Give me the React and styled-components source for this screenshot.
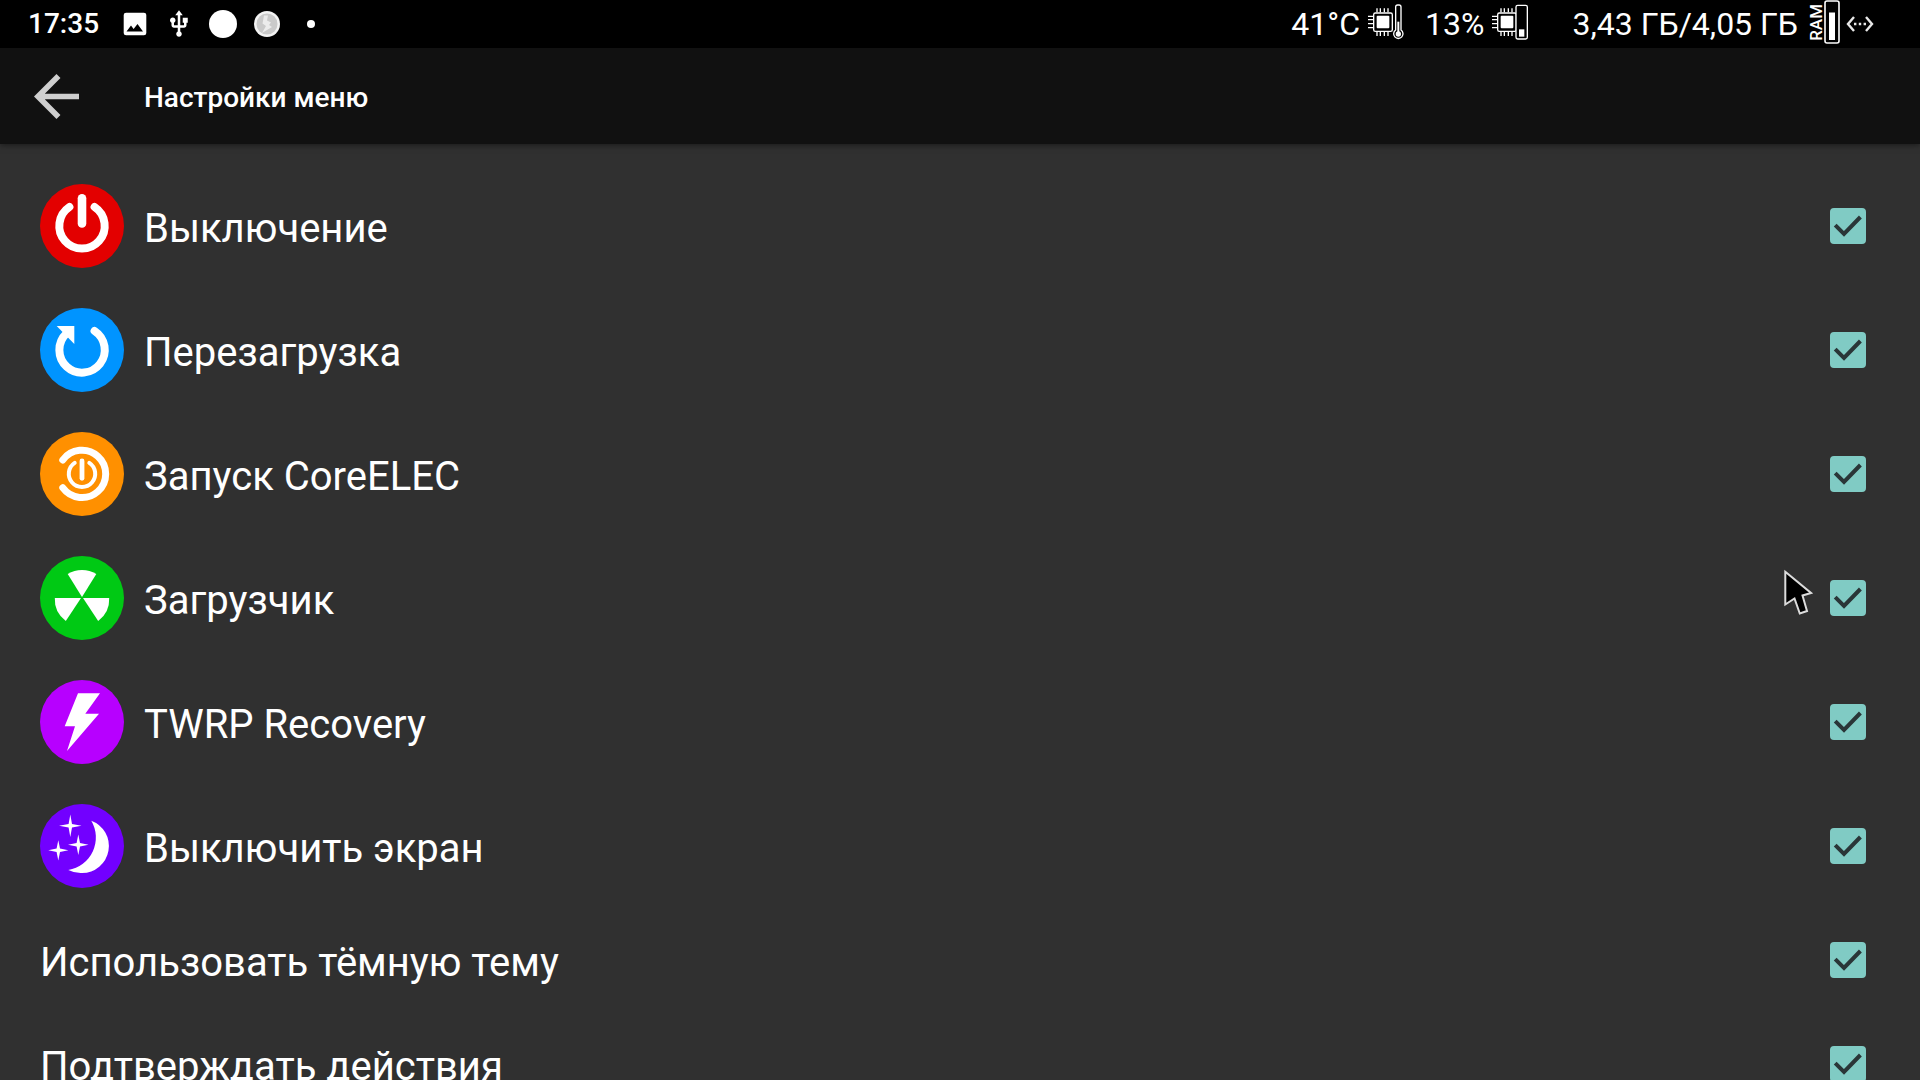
import React, { useState } from 'react'
import styled, { createGlobalStyle } from 'styled-components'

const GlobalStyle = createGlobalStyle`
  * {
    box-sizing: border-box;
  }
  body {
    margin: 0;
    background: #303030;
    color: #fff;
    font-family: Roboto, 'Noto Sans', sans-serif;
  }
`

const Page = styled.div`
  position: relative;
  display: flex;
  flex-direction: column;
  height: 100vh;
  overflow: hidden;
`

const StatusBar = styled.div`
  display: flex;
  flex: none;
  justify-content: space-between;
  height: 48px;
  padding: 0 46px 0 28px;
  background: #000;
`

const StatusGroup = styled.div`
  display: flex;
  align-items: center;
`

const Clock = styled.time`
  margin-right: 14px;
  font-size: 28px;
  font-weight: 500;
  line-height: 48px;
`

const Notifications = styled.div`
  display: grid;
  grid-auto-flow: column;
  grid-auto-columns: 44px;
  place-items: center;
`

const Stat = styled.div`
  display: flex;
  align-items: center;
  gap: ${(props) => props.gap || '8px'};
  margin-right: ${(props) => props.space || '0'};
  font-size: 32px;
  line-height: 48px;
`

const RamLabel = styled.span`
  writing-mode: vertical-rl;
  transform: rotate(180deg);
  font-size: 17px;
  font-weight: 500;
  line-height: 16px;
`

const RamMeter = styled.div`
  display: flex;
  align-items: center;
  height: 48px;
  padding-bottom: 4px;
`

const AppBar = styled.header`
  position: relative;
  z-index: 1;
  display: flex;
  flex: none;
  align-items: center;
  height: 96px;
  padding: 0 34px;
  background: #111;
  box-shadow: 0 1px 6px rgba(0, 0, 0, 0.5);
`

const BackButton = styled.button`
  display: flex;
  padding: 0;
  margin-right: 65px;
  border: 0;
  background: none;
  color: #cfcfcf;
  cursor: pointer;
`

const Title = styled.h1`
  margin: 0;
  padding-top: 4px;
  font-size: 28px;
  font-weight: 500;
  line-height: 32px;
`

const List = styled.ul`
  flex: 1;
  min-height: 0;
  margin: 0;
  padding: 20px 0;
  overflow-y: auto;
  scrollbar-width: none;
  list-style: none;
`

const Row = styled.label`
  display: flex;
  align-items: center;
  gap: 20px;
  height: ${(props) => (props.$tall ? '124px' : '104px')};
  padding: 0 54px 0 40px;
  cursor: pointer;
`

const RowText = styled.span`
  flex: 1;
  padding-top: 6px;
  font-size: 40px;
  line-height: 48px;
`

const RowIcon = styled.span`
  display: flex;
  flex: none;
  width: 84px;
  height: 84px;
  border-radius: 50%;
  background: ${(props) => props.color};
`

const CheckWrap = styled.span`
  display: grid;
  flex: none;
  width: 36px;
  height: 36px;

  > * {
    grid-area: 1 / 1;
  }

  svg {
    pointer-events: none;
  }
`

const CheckInput = styled.input`
  appearance: none;
  width: 36px;
  height: 36px;
  margin: 0;
  border: 4px solid #80cbc4;
  border-radius: 4px;

  &:checked {
    background: #80cbc4;
  }
`

const Pointer = styled.svg`
  position: absolute;
  z-index: 2;
  top: 569px;
  left: 1783px;
  pointer-events: none;
`

const PowerIcon = () => (
  <svg width="84" height="84" fill="none" stroke="#fff" strokeLinecap="round">
    <path d="M29.4 23A22.7 22.7 0 1 0 54.6 23" strokeWidth="8" />
    <path d="M42 14.3V39.5" strokeWidth="8.6" />
  </svg>
)

const RebootIcon = () => (
  <svg width="84" height="84" fill="none" stroke="#fff">
    <path
      d="M26.5 25.4A22.7 22.7 0 1 0 54.6 23"
      strokeWidth="8"
      strokeLinecap="round"
    />
    <path d="M16.7 18H34.3V36Z" fill="#fff" stroke="none" />
  </svg>
)

const CoreIcon = () => (
  <svg width="84" height="84" fill="none" stroke="#fff" strokeLinecap="round">
    <path d="M22.8 28A23.7 23.7 0 1 1 22.8 55.8" strokeWidth="7" />
    <path d="M34.7 30.8A13.2 13.2 0 1 0 49.3 30.8" strokeWidth="4" />
    <path d="M42 29V46.3" strokeWidth="4.8" />
  </svg>
)

const RadiationIcon = () => (
  <svg width="84" height="84" fill="#fff">
    <path d="M42 41L27.7 18A27.3 27.3 0 0 1 56.3 18Z" />
    <path d="M41 42L25.8 65A27.3 27.3 0 0 1 14.8 42Z" />
    <path d="M43 42L58.2 65A27.3 27.3 0 0 0 69.2 42Z" />
  </svg>
)

const BoltIcon = () => (
  <svg width="84" height="84" fill="#fff">
    <path d="M38 13.3H60L45.3 33.7H59L27 71L35 46.3H24.7Z" />
  </svg>
)

const MoonIcon = () => (
  <svg width="84" height="84" fill="#fff">
    <path d="M51.3 16.7A27 27 0 0 1 42 69A27 27 0 0 1 28.3 66A33 33 0 0 0 51.3 16.7Z" />
    <path d="M30.3 10.5L32 20L41.5 21.7L32 23.4L30.3 33L28.6 23.4L19 21.7L28.6 20Z" />
    <path d="M38.3 30.5L40 39L48.5 40.7L40 42.4L38.3 51L36.6 42.4L28 40.7L36.6 39Z" />
    <path d="M18.3 36.3L20 44.6L28.3 46.3L20 48L18.3 56.5L16.6 48L8.3 46.3L16.6 44.6Z" />
  </svg>
)

const PictureIcon = () => (
  <svg width="24" height="24">
    <rect x="0.7" y="0.7" width="22.6" height="22.6" rx="2.4" fill="#fff" />
    <path d="M3.5 19.5L8 13.6L10.6 17L14.5 12L20 19.5Z" fill="#000" />
  </svg>
)

const UsbIcon = () => (
  <svg width="20" height="28" viewBox="4 1 16 22" fill="#fff">
    <path d="M15 7v4h1v2h-3V5h2l-3-4-3 4h2v8H8v-2.07c.7-.37 1.2-1.08 1.2-1.93 0-1.21-.99-2.2-2.2-2.2-1.21 0-2.2.99-2.2 2.2 0 .85.5 1.56 1.2 1.93V13c0 1.11.89 2 2 2h3v3.05c-.71.37-1.2 1.1-1.2 1.95 0 1.22.99 2.2 2.2 2.2 1.21 0 2.2-.98 2.2-2.2 0-.85-.49-1.58-1.2-1.95V15h3c1.11 0 2-.89 2-2v-2h1V7h-4z" />
  </svg>
)

const DiscIcon = () => (
  <svg width="28" height="28">
    <circle cx="14" cy="14" r="14" fill="#fff" />
  </svg>
)

const BadgeIcon = () => (
  <svg width="26" height="26">
    <circle cx="13" cy="13" r="13" fill="#f4f4f4" />
    <circle cx="13" cy="13" r="10.5" fill="#cacaca" />
    <path d="M10 4.5h4l-1 5 4 2-2 2.5 3 2-10 6 4-7-3.5-2.5z" fill="#ececec" />
  </svg>
)

const DotIcon = () => (
  <svg width="8" height="8">
    <circle cx="4" cy="4" r="4" fill="#fff" />
  </svg>
)

// chip body and pins, shared by the temperature and load icons
const Chip = () => (
  <g>
    <path
      d="M27 13v12M37 13v12M49 13v12M60 13v12M27 83v13M37 83v13M49 83v13M60 83v13M0 37h15M0 47h15M0 59h15M0 71h15"
      stroke="#fff"
      strokeWidth="4"
    />
    <rect
      x="17"
      y="27"
      width="56"
      height="55"
      rx="5"
      fill="#000"
      stroke="#fff"
      strokeWidth="4"
    />
    <rect x="26" y="35" width="38" height="38" rx="3" fill="#fff" />
  </g>
)

const TemperatureIcon = () => (
  <svg width="36" height="40" viewBox="0 0 108 120">
    <Chip />
    <path
      d="M83 78V9a6 6 0 0 1 6-6h4a6 6 0 0 1 6 6V78A14 14 0 1 1 83 78Z"
      fill="#000"
      stroke="#fff"
      strokeWidth="4"
    />
    <circle cx="91" cy="90" r="8" fill="#fff" />
    <path d="M91 53V90" stroke="#fff" strokeWidth="6" />
  </svg>
)

const LoadIcon = () => (
  <svg width="36" height="40" viewBox="0 0 108 120">
    <Chip />
    <rect
      x="72"
      y="4"
      width="34"
      height="101"
      rx="5"
      fill="#000"
      stroke="#fff"
      strokeWidth="4"
    />
    <rect x="81" y="76" width="16" height="22" fill="#fff" />
  </svg>
)

const MemoryIcon = () => (
  <svg width="16" height="44">
    <rect
      x="1"
      y="1"
      width="14"
      height="42"
      rx="2"
      fill="none"
      stroke="#fff"
      strokeWidth="1.6"
    />
    <rect x="5" y="12.5" width="6" height="27.5" fill="#fff" />
  </svg>
)

const EthernetIcon = () => (
  <svg width="28" height="16" fill="none" stroke="#e8e8e8" strokeWidth="2.4">
    <path d="M8 1L2 8L8 15M20 1L26 8L20 15" />
    <path d="M8 8h2.4M12.8 8h2.4M17.6 8h2.4" />
  </svg>
)

const items = [
  { text: 'Выключение', color: '#e30000', icon: <PowerIcon /> },
  { text: 'Перезагрузка', color: '#0094ff', icon: <RebootIcon /> },
  { text: 'Запуск CoreELEC', color: '#ff9000', icon: <CoreIcon /> },
  { text: 'Загрузчик', color: '#00c914', icon: <RadiationIcon /> },
  { text: 'TWRP Recovery', color: '#b700ff', icon: <BoltIcon /> },
  { text: 'Выключить экран', color: '#7200ff', icon: <MoonIcon /> },
  { text: 'Использовать тёмную тему' },
  { text: 'Подтверждать действия' },
]

const MenuItem = ({ item }) => {
  const [checked, setChecked] = useState(true)

  return (
    <li>
      <Row $tall={Boolean(item.icon)}>
        {item.icon && <RowIcon color={item.color}>{item.icon}</RowIcon>}
        <RowText>{item.text}</RowText>
        <CheckWrap>
          <CheckInput
            type="checkbox"
            checked={checked}
            onChange={(e) => setChecked(e.target.checked)}
          />
          {checked && (
            <svg width="36" height="36">
              <path
                d="M5.2 17.2L14 26L30.4 9"
                fill="none"
                stroke="#2a3638"
                strokeWidth="4"
              />
            </svg>
          )}
        </CheckWrap>
      </Row>
    </li>
  )
}

const App = () => (
  <>
    <GlobalStyle />
    <Page>
      <StatusBar>
        <StatusGroup>
          <Clock>17:35</Clock>
          <Notifications>
            <PictureIcon />
            <UsbIcon />
            <DiscIcon />
            <BadgeIcon />
            <DotIcon />
          </Notifications>
        </StatusGroup>
        <StatusGroup>
          <Stat space="21px">
            41°C
            <TemperatureIcon />
          </Stat>
          <Stat space="44px">
            13%
            <LoadIcon />
          </Stat>
          <Stat gap="10px" space="6px">
            3,43 ГБ/4,05 ГБ
            <RamMeter>
              <RamLabel>RAM</RamLabel>
              <MemoryIcon />
            </RamMeter>
          </Stat>
          <EthernetIcon />
        </StatusGroup>
      </StatusBar>
      <AppBar>
        <BackButton aria-label="Назад">
          <svg width="45" height="45" viewBox="4 4 16 16" fill="currentColor">
            <path d="M20 11H7.83l5.59-5.59L12 4l-8 8 8 8 1.41-1.41L7.83 13H20v-2z" />
          </svg>
        </BackButton>
        <Title>Настройки меню</Title>
      </AppBar>
      <List>
        {items.map((item) => (
          <MenuItem key={item.text} item={item} />
        ))}
      </List>
      <Pointer width="30" height="46">
        <path
          d="M2.3 2.8L28 24L19.5 26.5L24 42L16.8 44.5L11.5 29.5L2.3 35.5Z"
          fill="#000"
          stroke="#dcdcdc"
          strokeWidth="2"
        />
      </Pointer>
    </Page>
  </>
)

export default App
